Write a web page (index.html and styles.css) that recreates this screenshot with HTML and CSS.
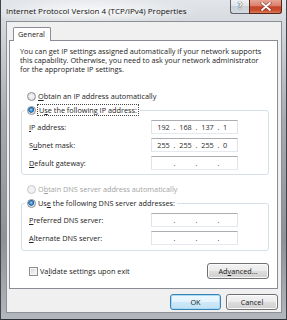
FILE: index.html
```html
<!DOCTYPE html>
<html>
<head>
<meta charset="utf-8">
<link rel="stylesheet" href="styles.css">
</head>
<body>
<div class="window">
  <div class="titlebar">
    <div class="title">Internet Protocol Version 4 (TCP/IPv4) Properties</div>
    <div class="caption-buttons">
      <div class="cap help">?</div>
      <div class="cap close">
        <svg width="12" height="9" viewBox="0 0 12 9">
          <path d="M2 1 L10 8 M10 1 L2 8" stroke="#5a1d12" stroke-width="3.2" stroke-linecap="round" fill="none" opacity="0.55"/>
          <path d="M2 1 L10 8 M10 1 L2 8" stroke="#ffffff" stroke-width="1.8" stroke-linecap="round" fill="none"/>
        </svg>
      </div>
    </div>
  </div>
  <div class="client">
    <div class="tabs"><div class="tab">General</div></div>
    <div class="panel">
      <p class="intro">You can get IP settings assigned automatically if your network supports<br>this capability. Otherwise, you need to ask your network administrator<br>for the appropriate IP settings.</p>

      <div class="radio-row top-radio"><span class="radio"></span><span><u>O</u>btain an IP address automatically</span></div>

      <fieldset class="group">
        <legend class="radio-row"><span class="radio checked"></span><span class="focus">U<u>s</u>e the following IP address:</span></legend>
        <div class="field-row">
          <span class="label"><u>I</u>P address:</span>
          <div class="ip"><span>192</span><span class="dot">.</span><span>168</span><span class="dot">.</span><span>137</span><span class="dot">.</span><span>1</span></div>
        </div>
        <div class="field-row">
          <span class="label">S<u>u</u>bnet mask:</span>
          <div class="ip"><span>255</span><span class="dot">.</span><span>255</span><span class="dot">.</span><span>255</span><span class="dot">.</span><span>0</span></div>
        </div>
        <div class="field-row">
          <span class="label"><u>D</u>efault gateway:</span>
          <div class="ip"><span></span><span class="dot">.</span><span></span><span class="dot">.</span><span></span><span class="dot">.</span><span></span></div>
        </div>
      </fieldset>

      <div class="radio-row dns-radio disabled"><span class="radio"></span><span>O<u>b</u>tain DNS server address automatically</span></div>

      <fieldset class="group">
        <legend class="radio-row"><span class="radio checked"></span><span>Us<u>e</u> the following DNS server addresses:</span></legend>
        <div class="field-row">
          <span class="label"><u>P</u>referred DNS server:</span>
          <div class="ip"><span></span><span class="dot">.</span><span></span><span class="dot">.</span><span></span><span class="dot">.</span><span></span></div>
        </div>
        <div class="field-row">
          <span class="label"><u>A</u>lternate DNS server:</span>
          <div class="ip"><span></span><span class="dot">.</span><span></span><span class="dot">.</span><span></span><span class="dot">.</span><span></span></div>
        </div>
      </fieldset>

      <div class="bottom-row">
        <div class="check-row"><span class="checkbox"></span><span>Va<u>l</u>idate settings upon exit</span></div>
        <button class="btn advanced">Ad<u>v</u>anced...</button>
      </div>
    </div>
    <div class="dialog-buttons">
      <button class="btn ok">OK</button>
      <button class="btn cancel">Cancel</button>
    </div>
  </div>
</div>
</body>
</html>
```

FILE: styles.css
```css
* { box-sizing: border-box; }
html, body { margin: 0; padding: 0; }
body {
  width: 287px;
  height: 320px;
  overflow: hidden;
  font-family: "Open Sans", "Noto Sans", sans-serif;
  font-size: 7.3px;
  line-height: 10px;
  color: #222;
  background: #ffffff;
}
u { text-decoration: underline; text-underline-offset: 1px; }

.window {
  width: 287px;
  height: 320px;
  display: flex;
  flex-direction: column;
  padding: 0 4px 6px 5px;
  border-left: 1px solid #3f444a;
  border-right: 1px solid #3f444a;
  border-bottom: 1px solid #2e3136;
  background:
    radial-gradient(ellipse 110px 14px at 90px 11px, rgba(255,255,255,0.85), rgba(255,255,255,0) 100%),
    linear-gradient(to bottom, #e2e5e9 0px, #d6dade 22px, #a7abb0 120px, #8e9297 240px, #b4b7bb 320px);
}

.titlebar {
  height: 21px;
  display: flex;
  justify-content: space-between;
  align-items: flex-start;
}
.title {
  padding-top: 6px;
  font-size: 8px;
  line-height: 10px;
  color: #111;
  white-space: nowrap;
}
.caption-buttons {
  display: flex;
}
.cap {
  height: 14px;
  display: flex;
  align-items: center;
  justify-content: center;
  border: 1px solid #5d646d;
  border-top: none;
}
.help {
  width: 19px;
  border-right: none;
  border-radius: 0 0 0 3px;
  background: linear-gradient(to bottom, #eef1f4 0%, #dfe4e9 45%, #c9d0d7 50%, #d4dadf 100%);
  color: #ffffff;
  font-family: "DejaVu Sans", sans-serif;
  font-weight: bold;
  font-size: 8px;
  text-shadow: 0 0 1px #2f3a48, 0 0 1px #2f3a48;
}
.close {
  width: 33px;
  border-color: #5a2318;
  border-radius: 0 0 3px 0;
  background: linear-gradient(to bottom, #e7a493 0%, #d9806b 45%, #c4442b 52%, #c9502f 80%, #dc7c5e 100%);
}

.client {
  flex: 1;
  display: flex;
  flex-direction: column;
  background: #f0f0f0;
  border: 1px solid #8b9097;
  padding: 5px 3px 0 2px;
}

.tabs {
  display: flex;
  padding-left: 4px;
  margin-bottom: -1px;
  position: relative;
  z-index: 1;
}
.tab {
  height: 14px;
  padding: 0 5px 0 4px;
  background: #ffffff;
  border: 1px solid #898c95;
  border-bottom: none;
  border-radius: 2px 2px 0 0;
  line-height: 12px;
}

.panel {
  background: #ffffff;
  border: 1px solid #898c95;
  padding: 6px 8px 9px 10px;
}

.intro {
  margin: 0;
  line-height: 9px;
  white-space: nowrap;
}

.radio-row {
  display: flex;
  align-items: center;
  gap: 2px;
  height: 10px;
  white-space: nowrap;
}
.top-radio { margin: 17px 0 0 7px; }
.dns-radio { margin: 9px 0 0 7px; }
.disabled { color: #a3a3a3; }

.radio {
  width: 9px;
  height: 9px;
  border-radius: 50%;
  border: 1px solid #8b8f94;
  background: radial-gradient(circle at 50% 50%, #f8f8f8 0, #e2e3e4 70%, #d0d2d4 100%);
  flex: none;
}
.disabled .radio { border-color: #c4c6c8; background: #f2f2f2; }
.radio.checked {
  background: radial-gradient(circle at 45% 40%, #9fd6f6 0, #3a8fd0 1.6px, #1c5c98 2.6px, #dfe2e5 3.2px, #eef0f1 100%);
}

.focus {
  outline: 1px dotted #4a4a4a;
  padding: 0 1px;
}

.group {
  margin: 4px 0 0 1px;
  padding: 5px 30px 4px 0;
  border: 1px solid #d5dfe5;
  border-radius: 3px;
  min-width: 0;
}
.group + .bottom-row { margin-top: 12px; }
.group legend {
  margin-left: 3px;
  padding: 0 2px;
  background: #ffffff;
}
.group:last-of-type { padding-bottom: 5px; }

.field-row {
  display: flex;
  align-items: center;
  justify-content: space-between;
  padding-left: 7px;
  height: 14px;
}
.field-row + .field-row { margin-top: 4px; }

.ip {
  width: 87px;
  height: 14px;
  border: 1px solid #e2e3ea;
  border-top-color: #abadb3;
  border-bottom-color: #e3e9ef;
  background: #ffffff;
  display: grid;
  grid-template-columns: 19px 3px 19px 3px 19px 3px 10px;
  padding-left: 2px;
  line-height: 12px;
  color: #2a2a2a;
}
.ip span { text-align: center; }

.bottom-row {
  display: flex;
  justify-content: space-between;
  align-items: center;
  height: 16px;
}
.check-row {
  display: flex;
  align-items: center;
  gap: 2px;
  padding-left: 9px;
  white-space: nowrap;
}
.checkbox {
  width: 9px;
  height: 9px;
  border: 1px solid #8f8f8f;
  background: linear-gradient(135deg, #cfcfcf 0%, #eeeeee 60%, #f8f8f8 100%);
  box-shadow: inset 0 0 0 1px #f4f4f4;
}

.btn {
  font-family: inherit;
  font-size: 7.3px;
  color: #222;
  height: 16px;
  padding: 0;
  border: 1px solid #707070;
  border-radius: 3px;
  background: linear-gradient(to bottom, #f3f3f3 0%, #ebebeb 48%, #dddddd 52%, #cfcfcf 100%);
  box-shadow: inset 0 0 0 1px #fbfbfb;
  line-height: 12px;
}
.advanced { width: 62px; }

.dialog-buttons {
  display: flex;
  justify-content: flex-end;
  gap: 5px;
  margin-top: 5px;
}
.ok {
  width: 51px;
  border-color: #3c7fb1;
  background: linear-gradient(to bottom, #eef8fe 0%, #e2f3fd 48%, #cde9f9 52%, #bfe2f6 100%);
  box-shadow: inset 0 0 0 1px #a8dcf6;
}
.cancel { width: 52px; }
```
